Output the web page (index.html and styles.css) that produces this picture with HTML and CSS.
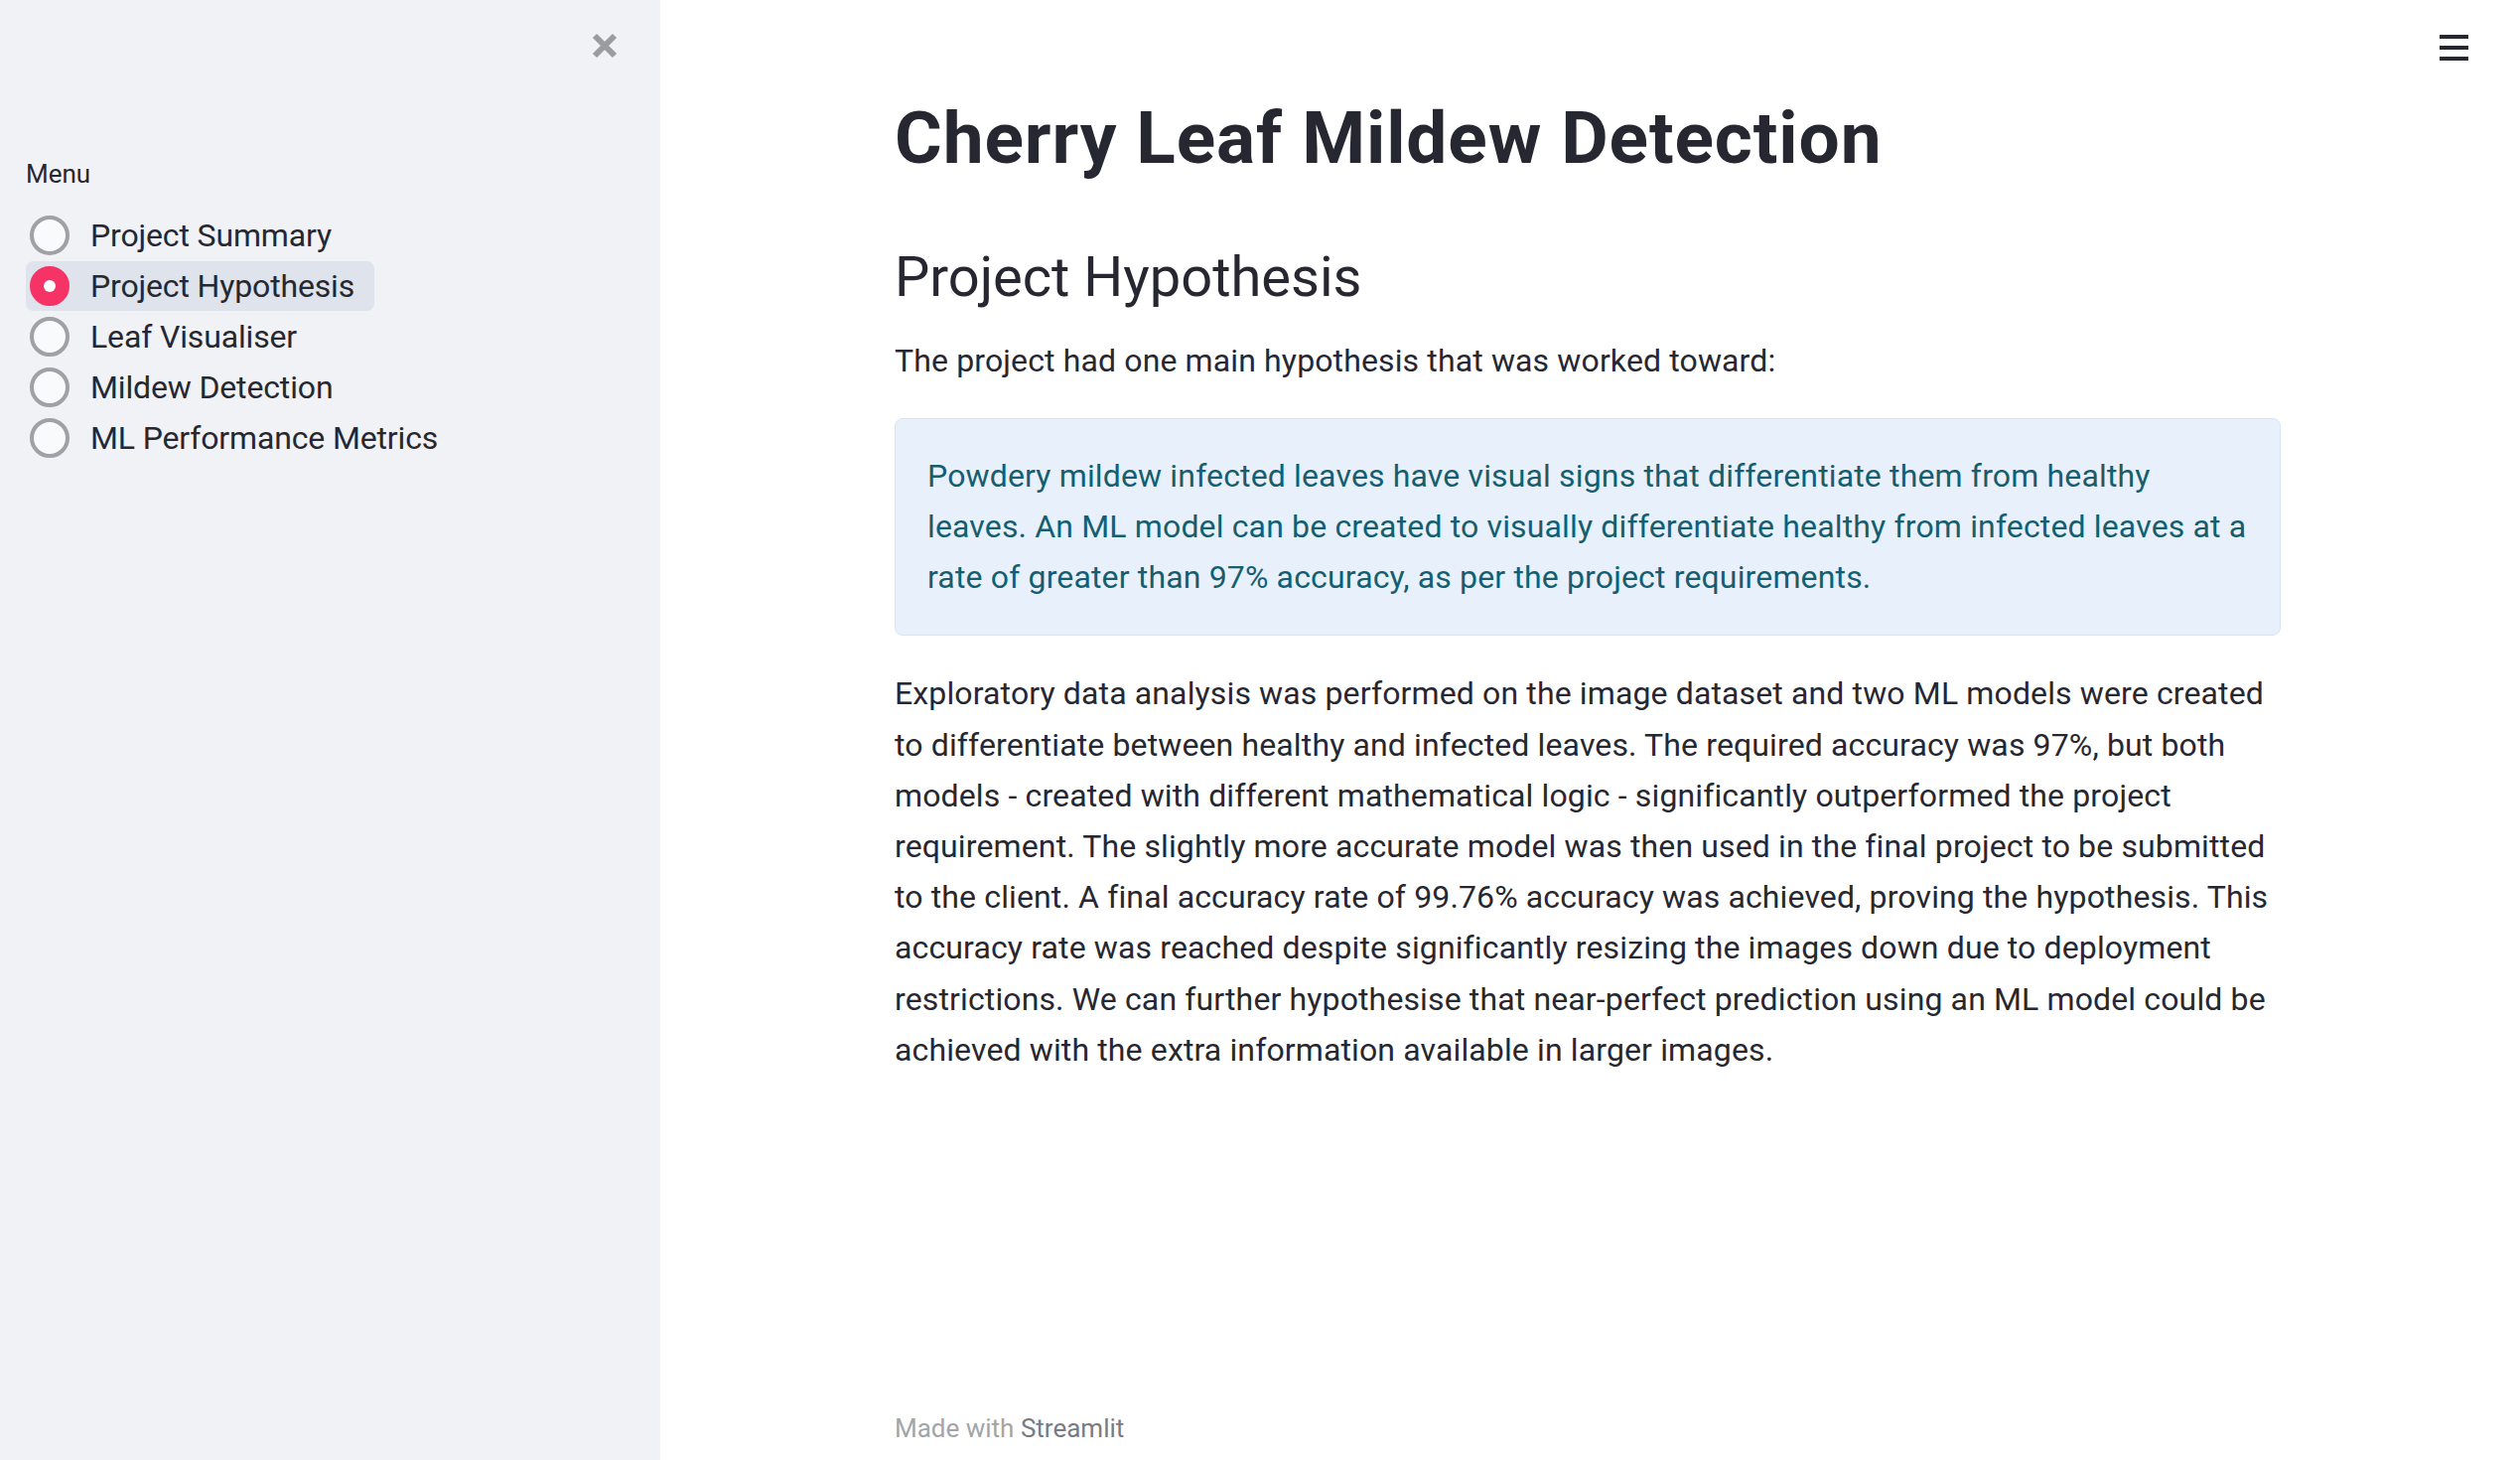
FILE: index.html
```html
<!DOCTYPE html>
<html lang="en">
<head>
<meta charset="utf-8">
<title>Cherry Leaf Mildew Detection</title>
<link rel="stylesheet" href="styles.css">
</head>
<body>
<div class="app">
  <aside class="sidebar">
    <div class="sidebar-top">
      <button class="close-btn" aria-label="Close sidebar">
        <svg width="28" height="28" viewBox="0 0 28 28"><path d="M4 4 L24 24 M24 4 L4 24" stroke="#9b9ba0" stroke-width="6" stroke-linecap="butt" fill="none"/></svg>
      </button>
    </div>
    <div class="menu-label">Menu</div>
    <div class="radio-group">
      <label class="radio"><span class="dot"></span><span class="radio-text">Project Summary</span></label>
      <label class="radio selected"><span class="dot"></span><span class="radio-text">Project Hypothesis</span></label>
      <label class="radio"><span class="dot"></span><span class="radio-text">Leaf Visualiser</span></label>
      <label class="radio"><span class="dot"></span><span class="radio-text">Mildew Detection</span></label>
      <label class="radio"><span class="dot"></span><span class="radio-text">ML Performance Metrics</span></label>
    </div>
  </aside>
  <main class="main">
    <button class="menu-btn" aria-label="Main menu">
      <span></span><span></span><span></span>
    </button>
    <div class="block">
      <h1 class="title">Cherry Leaf Mildew Detection</h1>
      <h2 class="subheader">Project Hypothesis</h2>
      <p class="text intro">The project had one main hypothesis that was worked toward:</p>
      <div class="info">
        <p class="text">Powdery mildew infected leaves have visual signs that differentiate them from healthy<br>leaves. An ML model can be created to visually differentiate healthy from infected leaves at a<br>rate of greater than 97% accuracy, as per the project requirements.</p>
      </div>
      <p class="text body">Exploratory data analysis was performed on the image dataset and two ML models were created<br>to differentiate between healthy and infected leaves. The required accuracy was 97%, but both<br>models - created with different mathematical logic - significantly outperformed the project<br>requirement. The slightly more accurate model was then used in the final project to be submitted<br>to the client. A final accuracy rate of 99.76% accuracy was achieved, proving the hypothesis. This<br>accuracy rate was reached despite significantly resizing the images down due to deployment<br>restrictions. We can further hypothesise that near-perfect prediction using an ML model could be<br>achieved with the extra information available in larger images.</p>
      <footer class="footer">Made with <span class="brand">Streamlit</span></footer>
    </div>
  </main>
</div>
</body>
</html>
```
FILE: styles.css
```css
* { box-sizing: border-box; }
html, body { margin: 0; padding: 0; }
body {
  font-family: Roboto, "Liberation Sans", sans-serif;
  color: #262730;
  background: #ffffff;
}
.app {
  display: flex;
  height: 1470px;
  overflow: hidden;
}
.sidebar {
  width: 665px;
  flex: 0 0 665px;
  background: #f0f2f6;
  padding: 32px 0 0 26px;
}
.sidebar-top {
  display: flex;
  justify-content: flex-end;
  padding-right: 42px;
  height: 28px;
}
.close-btn {
  border: 0;
  background: none;
  padding: 0;
  width: 28px;
  height: 28px;
  display: block;
}
.close-btn svg { display: block; }
.menu-label {
  margin-top: 99px;
  font-size: 26px;
  line-height: 32px;
  height: 32px;
}
.radio-group {
  margin-top: 21px;
  display: flex;
  flex-direction: column;
  gap: 1px;
  align-items: flex-start;
}
.radio {
  display: flex;
  align-items: center;
  height: 50px;
  padding: 0 20px 0 4px;
  border-radius: 8px;
  font-size: 32px;
  letter-spacing: -0.15px;
}
.radio.selected { background: #dfe3eb; }
.dot {
  width: 40px;
  height: 40px;
  border-radius: 50%;
  border: 4px solid #a0a0a5;
  background: #f9fafb;
  margin-right: 21px;
  display: flex;
  align-items: center;
  justify-content: center;
}
.radio.selected .dot {
  border-color: #f63366;
  background: #f63366;
}
.radio.selected .dot::after {
  content: "";
  width: 12px;
  height: 12px;
  border-radius: 50%;
  background: #ffffff;
}
.main {
  flex: 1;
  position: relative;
  padding-right: 5px;
  display: flex;
  justify-content: center;
}
.menu-btn {
  position: absolute;
  top: 35px;
  right: 52px;
  width: 29px;
  height: 26px;
  border: 0;
  background: none;
  padding: 0;
  display: flex;
  flex-direction: column;
  justify-content: space-between;
}
.menu-btn span {
  display: block;
  height: 4px;
  width: 29px;
  background: #262730;
}
.block {
  width: 1396px;
  display: flex;
  flex-direction: column;
  padding-top: 96px;
  padding-bottom: 9px;
}
.title {
  margin: 0;
  font-size: 73px;
  line-height: 86.4px;
  font-weight: 700;
  letter-spacing: 0.9px;
}
.subheader {
  margin: 64px 0 0;
  font-size: 56px;
  line-height: 67.2px;
  font-weight: 400;
}
.text {
  margin: 0;
  font-size: 32px;
  line-height: 51.2px;
  letter-spacing: 0.13px;
  white-space: nowrap;
}
.intro { margin-top: 24px; }
.info {
  margin-top: 32px;
  background: #e8f1fb;
  border: 1px solid #d5e5f6;
  border-radius: 8px;
  padding: 32px;
  color: #155e70;
}
.info .text { letter-spacing: 0.15px; }
.body { margin-top: 33px; }
.footer {
  margin-top: auto;
  font-size: 26px;
  line-height: 44.8px;
  color: #a3a4a8;
}
.footer .brand { color: #797b82; }
```
